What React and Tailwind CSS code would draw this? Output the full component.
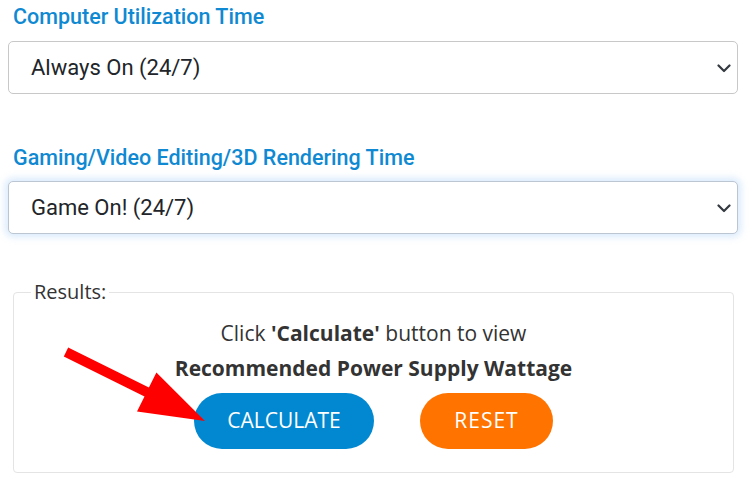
import React from "react";

function Chevron() {
  return (
    <svg width="14" height="10" viewBox="0 0 14 10" fill="none">
      <path d="M1.5 2.5 L7 8 L12.5 2.5" stroke="#343a40" strokeWidth="2.2" strokeLinecap="round" strokeLinejoin="round" />
    </svg>
  );
}

function FakeSelect({ value, focused }) {
  return (
    <div
      className={
        "flex items-center justify-between h-[53px] w-[730px] ml-[8px] pl-[22px] pr-[6px] bg-white rounded-[5px] border text-[22px] text-[#212529] " +
        (focused
          ? "border-[#bcc6d2] shadow-[0_0_7px_3px_rgba(120,180,240,0.28)]"
          : "border-[#c8c8c8]")
      }
    >
      <span>{value}</span>
      <Chevron />
    </div>
  );
}

function App() {
  return (
    <div className="relative w-[750px] h-[489px] bg-white overflow-hidden" style={{ fontFamily: "Roboto, sans-serif" }}>
      {/* Computer time */}
      <div className="pt-[4px]">
        <label className="block ml-[13px] text-[21.5px] leading-[25px] font-medium text-[#1089d3]">
          Computer Utilization Time
        </label>
        <div className="mt-[12px]">
          <FakeSelect value="Always On (24/7)" />
        </div>
      </div>

      {/* Gaming time */}
      <div className="mt-[51px]">
        <label className="block ml-[13px] text-[21.5px] leading-[25px] font-medium text-[#1089d3]">
          Gaming/Video Editing/3D Rendering Time
        </label>
        <div className="mt-[11px]">
          <FakeSelect value="Game On! (24/7)" focused />
        </div>
      </div>

      {/* Results */}
      <fieldset
        className="mt-[44px] ml-[13px] w-[721px] h-[195px] border border-[#e4e4e4] rounded-[4px] px-[17px] text-[#333]"
        style={{ fontFamily: '"Open Sans", sans-serif' }}
      >
        <legend className="px-[3px] text-[20px] leading-[28px] text-[#333]">Results:</legend>
        <div className="pt-[10px] text-center text-[21px]">
          <p className="leading-[35px]">
            Click <b>'Calculate'</b> button to view
          </p>
          <p className="leading-[35px] font-bold">Recommended Power Supply Wattage</p>
          <div className="mt-[7px] flex justify-center gap-[46px]">
            <button className="w-[180px] h-[56px] rounded-full bg-[#0288d1] text-white text-[21px] uppercase">
              Calculate
            </button>
            <button className="w-[133px] h-[56px] rounded-full bg-[#ff7400] text-white text-[21px] tracking-[1px] uppercase">
              Reset
            </button>
          </div>
        </div>
      </fieldset>

      {/* red arrow pointing at calculate */}
      <svg className="absolute left-0 top-0 pointer-events-none" width="750" height="489">
        <polygon
          fill="#ff0000"
          points="68.2,347.5 148.9,387.5 156.4,372.5 205,421 137,411.5 144.5,396.5 63.8,356.5"
        />
      </svg>
    </div>
  );
}

export default App;
